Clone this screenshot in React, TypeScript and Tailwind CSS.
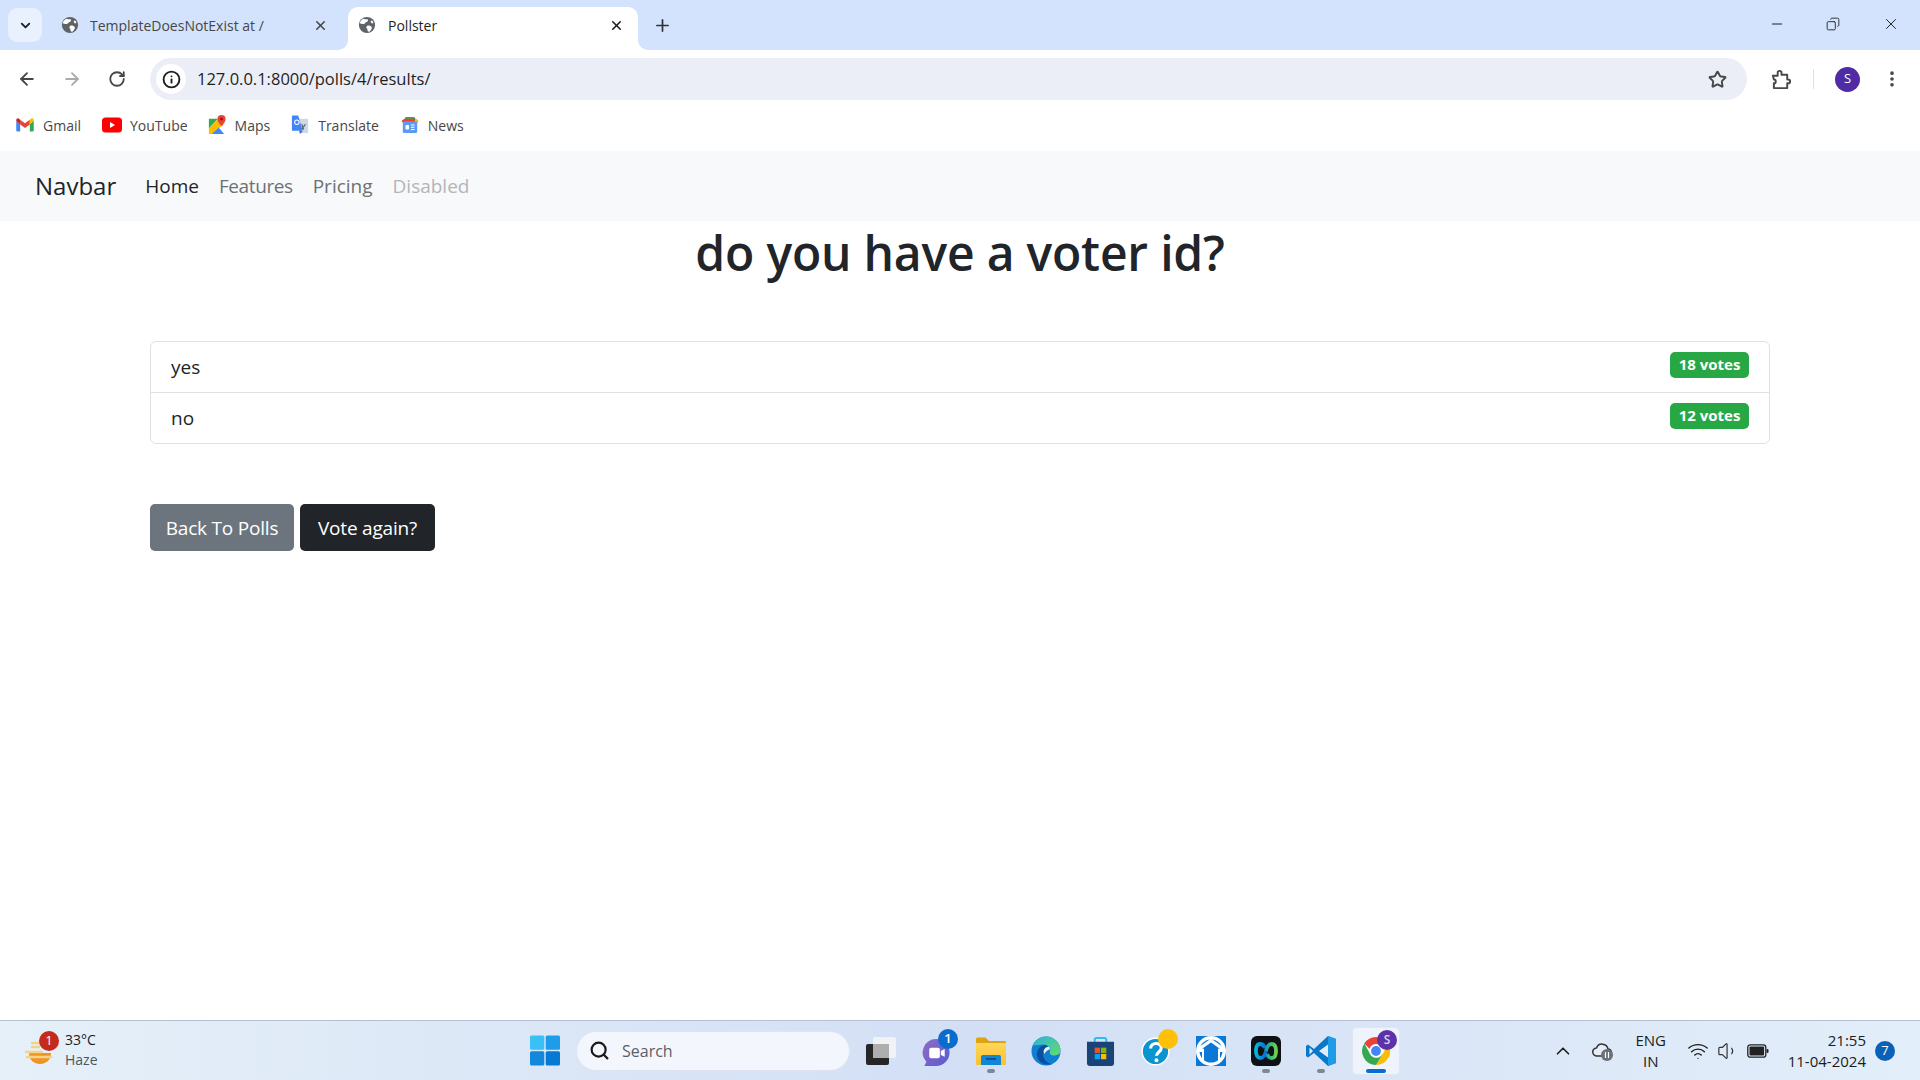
import React from 'react';
import { ArrowLeft, ArrowRight, ChevronDown, ChevronUp, Copy, Info, Minus, MoreVertical, Plus, RotateCw, Search, Star, Volume1, Wifi, X } from 'lucide-react';

const Globe = () => (
  <svg viewBox="0 0 20 20" className="w-[18px] h-[18px] shrink-0">
    <circle cx="10" cy="10" r="9" fill="#5f6368" />
    <path d="M6 3c2 1 4 0 5 1s-1 3-2 3-1 2-3 2-3-1-4-1c0-2 2-4 4-5zM10 11c2-1 4 0 5 1s0 3-1 4-2 2-3 1 0-2-1-3-1-2 0-3zM15 5c1 0 2 1 2 3l-2 0-1-2z" fill="#fff" />
  </svg>
);

const GmailIcon = () => (
  <svg viewBox="0 0 20 16" className="w-[18px] h-[14px]">
    <path d="M0 3v11a1.500 1.500 0 0 0 1.500 1.500H4.500V7z" fill="#4285f4" />
    <path d="M15.500 7v8.500h3a1.500 1.500 0 0 0 1.500-1.500V3z" fill="#34a853" />
    <path d="M4.500 2v5.500L10 11.500l5.500-4V2L10 6z" fill="#ea4335" />
    <path d="M0 3l4.500 4.500V2L3 .800C1.700-.200 0 .800 0 3z" fill="#c5221f" />
    <path d="M15.500 2v5.500L20 3c0-2.200-1.700-3.200-3-2.200z" fill="#fbbc04" />
  </svg>
);

const YoutubeIcon = () => (
  <svg viewBox="0 0 20 16" className="w-[20px] h-[16px]">
    <rect width="20" height="15" y=".5" rx="3.500" fill="#f00" />
    <path d="M8 5v6l5-3z" fill="#fff" />
  </svg>
);

const MapsIcon = () => (
  <svg viewBox="0 0 20 22" className="w-[18px] h-[20px]">
    <path d="M1 4h10L1 15z" fill="#34a853" />
    <path d="M1 15L11 4l6 6v1L4 21H1z" fill="#fbbc04" />
    <path d="M4 21l8-7 6 7z" fill="#4285f4" />
    <path d="M15 0a4.500 4.500 0 0 0-4.500 4.500C10.500 8 15 12 15 12s4.500-4 4.500-7.500A4.500 4.500 0 0 0 15 0z" fill="#ea4335" />
    <circle cx="15" cy="4.500" r="1.600" fill="#a50e0e" />
  </svg>
);

const TranslateIcon = () => (
  <svg viewBox="0 0 20 22" className="w-[18px] h-[20px]">
    <path d="M8 4h10a1 1 0 0 1 1 1v14a1 1 0 0 1-1 1H10z" fill="#cfd8e6" />
    <path d="M12 10l2 6M16 10l-4 6" stroke="#5f6368" strokeWidth="1.300" />
    <path d="M9 17l1 4 3-3z" fill="#3367d6" />
    <path d="M1 1.500A1 1 0 0 1 2 .500h6l5 17H2a1 1 0 0 1-1-1z" fill="#4285f4" />
    <circle cx="6.500" cy="8" r="2.500" fill="none" stroke="#fff" strokeWidth="1.200" />
  </svg>
);

const NewsIcon = () => (
  <svg viewBox="0 0 20 20" className="w-[18px] h-[18px]">
    <path d="M3 6L5 1h10l2 5z" fill="#34a853" />
    <path d="M1 5l3-2 12 0 3 2v2H1z" fill="#ea4335" />
    <path d="M16 3l3 2v2h-4z" fill="#fbbc04" />
    <rect x="2" y="6" width="16" height="13" rx="1.500" fill="#5c9bf1" />
    <rect x="5" y="10" width="4" height="5" rx="1" fill="#fff" />
    <path d="M11 10h4M11 12.500h4M11 15h4" stroke="#fff" strokeWidth="1.200" />
  </svg>
);

const Bookmark = ({ icon, label, className }: { icon: React.ReactNode; label: string; className: string }) => (
  <div className={`flex items-center gap-[8px] ${className}`}>
    <span className="w-[20px] flex justify-center">{icon}</span>
    <span className="text-[14px] text-[#474747] whitespace-nowrap">{label}</span>
  </div>
);

const ListRow = ({ label, votes, last }: { label: string; votes: string; last?: boolean }) => (
  <li className={`flex items-center justify-between pl-[20px] pr-[20px] ${last ? 'h-[50px]' : 'h-[51px] border-b border-[#dfe2e5]'}`}>
    <span className="text-[19px] text-[#212529]">{label}</span>
    <span className="mb-[5px] bg-[#28a745] text-white text-[15px] font-bold rounded-[5px] w-[79px] h-[26px] flex items-center justify-center">{votes}</span>
  </li>
);

const TaskSlot = ({ children, dot }: { children: React.ReactNode; dot?: boolean }) => (
  <div className="relative w-[55px] h-[48px] flex items-center justify-center">
    {children}
    {dot && <span className="absolute bottom-[2px] left-1/2 -translate-x-1/2 w-[8px] h-[4px] rounded-full bg-[#7f8793]" />}
  </div>
);

const Taskbar = () => (
  <div className="flex items-center h-[60px] border-t border-[#b5c0d0] bg-gradient-to-r from-[#e6f0f9] via-[#d3dff5] to-[#e2eef9]">
    {/* weather */}
    <div className="w-[517px] shrink-0 flex items-center pl-[24px]">
      <div className="relative w-[40px] h-[36px]">
        <svg viewBox="0 0 32 32" className="absolute left-0 top-[4px] w-[32px] h-[32px]">
          <path d="M5 16h22c0 7-5 11-11 11S5 23 5 16z" fill="#ee9422" />
          <path d="M2 15h16M8 10h7M3 20h24M8 6h6" stroke="#f4d28a" strokeWidth="2.500" strokeLinecap="round" />
        </svg>
        <span className="absolute left-[15px] -top-[2px] w-[20px] h-[20px] rounded-full bg-[#c42b1c] text-white text-[13px] flex items-center justify-center">1</span>
      </div>
      <div className="ml-[1px] leading-[20px] text-[14px] mt-[-2px]">
        <div className="text-[#1c1c1c]">33°C</div>
        <div className="text-[#4d5561]">Haze</div>
      </div>
    </div>

    {/* centre */}
    <div className="flex items-center">
      <div className="w-[55px] h-[48px] flex items-center justify-center">
        <svg viewBox="0 0 30 30" className="w-[30px] h-[31px]">
          <rect x="0" y="0" width="14.300" height="14.300" rx="1.500" fill="#39c0f5" />
          <rect x="15.700" y="0" width="14.300" height="14.300" rx="1.500" fill="#1c9ceb" />
          <rect x="0" y="15.700" width="14.300" height="14.300" rx="1.500" fill="#1288dd" />
          <rect x="15.700" y="15.700" width="14.300" height="14.300" rx="1.500" fill="#0679d2" />
        </svg>
      </div>
      <div className="ml-[4px] w-[274px] h-[40px] rounded-full bg-[#f3f7fd] border border-[#dde5f2] flex items-center pl-[12px] gap-[12px]">
        <Search className="w-[21px] h-[21px] text-[#1a1a1a]" strokeWidth={2.500} />
        <span className="text-[16px] text-[#5b5f66]">Search</span>
      </div>
      <div className="ml-[3px] flex items-center">
        <TaskSlot>
          <svg viewBox="0 0 30 28" className="w-[30px] h-[28px]">
            <rect x="0" y="7" width="23" height="21" rx="2" fill="#262626" />
            <rect x="7" y="0" width="23" height="21" rx="2" fill="#f4f4f4" fillOpacity=".85" />
            <rect x="7" y="7" width="16" height="14" fill="#aeaeae" />
          </svg>
        </TaskSlot>
        <TaskSlot>
          <svg viewBox="0 0 30 30" className="w-[30px] h-[29px] mt-[3px]">
            <defs>
              <linearGradient id="teamsFill" x1="0" y1="0" x2="1" y2="1">
                <stop offset="0" stopColor="#8f6cc4" />
                <stop offset="1" stopColor="#5b5bd0" />
              </linearGradient>
            </defs>
            <path d="M15 1a14 14 0 0 1 0 28H3l2-4.500A14 14 0 0 1 15 1z" fill="url(#teamsFill)" />
            <rect x="8" y="10" width="11" height="11" rx="2" fill="#fff" />
            <path d="M20 13.500l4-2v8l-4-2z" fill="#fff" />
          </svg>
          <span className="absolute left-[30px] top-[2px] w-[20px] h-[20px] rounded-full bg-[#0a6cce] text-white text-[13px] font-semibold flex items-center justify-center">1</span>
        </TaskSlot>
        <TaskSlot dot>
          <svg viewBox="0 0 30 28" className="w-[30px] h-[28px]">
            <defs>
              <linearGradient id="folderFill" x1="0" y1="0" x2="0" y2="1">
                <stop offset="0" stopColor="#ffd65c" />
                <stop offset="1" stopColor="#fbc02d" />
              </linearGradient>
            </defs>
            <path d="M0 2a1.500 1.500 0 0 1 1.500-1.500h8L13 4h15.500A1.500 1.500 0 0 1 30 5.500V26a1.500 1.500 0 0 1-1.500 1.500h-27A1.500 1.500 0 0 1 0 26z" fill="#dca312" />
            <path d="M0 6h30v20.500a1.500 1.500 0 0 1-1.500 1.500h-27A1.500 1.500 0 0 1 0 26.500z" fill="url(#folderFill)" />
            <path d="M5 20a2 2 0 0 1 2-2h16a2 2 0 0 1 2 2v8H5z" fill="#0f86d6" />
            <rect x="10" y="21" width="10" height="1.800" fill="#0b4f8a" />
          </svg>
        </TaskSlot>
        <TaskSlot>
          <svg viewBox="0 0 32 32" className="w-[30px] h-[30px]">
            <defs>
              <linearGradient id="edgeGreen" x1="0" y1="0" x2="1" y2="1">
                <stop offset="0" stopColor="#2bb3d8" />
                <stop offset="1" stopColor="#65dc6c" />
              </linearGradient>
            </defs>
            <circle cx="16" cy="16" r="15.500" fill="#0f7fd4" />
            <path d="M2 10C5 4 10 .500 16 .500 25 .500 31.500 8 31.500 15c0 5-5 6.500-9 5.500-3-.800-2.500-3.500-2-5.500.800-3.500-4-6.500-8.500-6C8 9.500 5 9.500 2 10z" fill="url(#edgeGreen)" />
            <path d="M15 9.500C9 10 5.500 15.500 6.500 21.500 7.500 27.500 14 32 22 30c-6-1.500-10-6.500-9-11.500.5-3 3-5.500 6-5.500-1-2-2-3.500-4-3.500z" fill="#0c4f9f" />
            <path d="M19 11.500c-3 0-5.500 2.500-5.500 5 0 1 .5 2 1 2.500 1-2.500 3-4 5.500-4.500 0-1.500 0-2.500-1-3z" fill="#eaf2fb" />
          </svg>
        </TaskSlot>
        <TaskSlot>
          <svg viewBox="0 0 30 30" className="w-[29px] h-[29px] mt-[1px]">
            <path d="M9 8V3a2 2 0 0 1 2-2h8a2 2 0 0 1 2 2v5" fill="none" stroke="#38b6ea" strokeWidth="2" />
            <path d="M1 5h28v22a3 3 0 0 1-3 3H4a3 3 0 0 1-3-3z" fill="#1a4477" />
            <rect x="9" y="11" width="5.500" height="5.500" fill="#f25022" />
            <rect x="15.500" y="11" width="5.500" height="5.500" fill="#7fba00" />
            <rect x="9" y="17.500" width="5.500" height="5.500" fill="#00a4ef" />
            <rect x="15.500" y="17.500" width="5.500" height="5.500" fill="#ffb900" />
          </svg>
        </TaskSlot>
        <TaskSlot>
          <svg viewBox="0 0 30 30" className="w-[29px] h-[29px] mt-[1px]">
            <circle cx="15" cy="15" r="13.800" fill="#0a94d0" stroke="#fff" strokeWidth="1.500" />
            <path d="M10 12c0-7 11-7 11-.500 0 4-5 4-5 8" fill="none" stroke="#fff" strokeWidth="3.200" />
            <circle cx="16" cy="24" r="2" fill="#fff" />
          </svg>
          <span className="absolute left-[30px] top-[2px] w-[20px] h-[20px] rounded-full bg-[#ffc107]" />
        </TaskSlot>
        <TaskSlot>
          <svg viewBox="0 0 30 30" className="w-[30px] h-[30px]">
            <rect width="30" height="30" fill="#0a78d4" />
            <circle cx="15" cy="15" r="15" fill="#fff" />
            <circle cx="15" cy="15" r="11.500" fill="#0a78d4" />
            <path d="M15 2.500L27 11v5h-3.500v-3.500L15 6.500l-8.500 6V16H3v-5z" fill="#fff" />
            <path d="M9.500 11.500L15 8l5.500 3.500V24L15 20l-5.500 4z" fill="#0a78d4" />
            <path d="M6 13v11l2 2V12.500zM24 13v11l-2 2V12.500z" fill="#fff" />
          </svg>
        </TaskSlot>
        <TaskSlot dot>
          <div className="w-[30px] h-[30px] rounded-[6px] bg-[#0f1215] flex items-center justify-center">
            <svg viewBox="0 0 26 20" className="w-[26px] h-[20px]">
              <defs>
                <linearGradient id="webexLeft" x1="0" y1="0" x2="1" y2="0">
                  <stop offset="0" stopColor="#00b7d8" />
                  <stop offset="1" stopColor="#1660e0" />
                </linearGradient>
                <linearGradient id="webexRight" x1="0" y1="0" x2="1" y2="0">
                  <stop offset="0" stopColor="#0f9fb0" />
                  <stop offset="1" stopColor="#6cd04a" />
                </linearGradient>
              </defs>
              <path d="M12 7C11 4 9 3 7 3 4 3 3 6 3 10c0 4 1.500 7 4.500 7 3 0 5-4 5.500-7" fill="none" stroke="url(#webexLeft)" strokeWidth="3.800" />
              <path d="M13 10c.500-3 2.500-7 5.500-7 3 0 4.500 3 4.500 7 0 4-1 7-4 7-2 0-4-1-5-4" fill="none" stroke="url(#webexRight)" strokeWidth="3.800" />
            </svg>
          </div>
        </TaskSlot>
        <TaskSlot dot>
          <svg viewBox="0 0 30 30" className="w-[30px] h-[30px]">
            <path d="M22 0L8 13 2 8.500 0 10v10l2 1.500L8 17l14 13 8-3V3z" fill="#0a78c8" />
            <path d="M22 0v30l8-3V3z" fill="#1f9be8" />
            <path d="M3.500 11.500L7 15l-3.500 3.500zM22 8.500L13 15l9 6.500z" fill="#e2ebf8" />
          </svg>
        </TaskSlot>
        <div className="relative w-[48px] h-[48px] ml-[4px] flex items-center justify-center rounded-[5px] bg-[#eff3fb] border border-[#e0e7f3]">
          <svg viewBox="0 0 32 32" className="w-[30px] h-[30px]">
            <path d="M16 1a15 15 0 0 1 13 7.500H16a7.500 7.500 0 0 0-7 5L3.500 8A15 15 0 0 1 16 1z" fill="#ea4335" />
            <path d="M29 8.500A15 15 0 0 1 16 31l6.500-11A7.500 7.500 0 0 0 23 8.500z" fill="#fbbc04" />
            <path d="M16 31A15 15 0 0 1 3.500 8L9.500 19A7.500 7.500 0 0 0 22.500 20z" fill="#34a853" />
            <circle cx="16" cy="16" r="6" fill="#4285f4" stroke="#fff" strokeWidth="1.500" />
          </svg>
          <span className="absolute left-[24px] top-[2px] w-[20px] h-[20px] rounded-full bg-[#5b32a8] text-[#d8cff0] text-[12px] font-semibold flex items-center justify-center">S</span>
          <span className="absolute bottom-[1px] left-1/2 -translate-x-1/2 w-[20px] h-[4px] rounded-full bg-[#0a6cce]" />
        </div>
      </div>
    </div>

    {/* tray */}
    <div className="flex-1 flex items-center justify-end h-full text-[#1c1c1c]">
      <ChevronUp className="w-[22px] h-[22px] mr-[18px]" strokeWidth={1.800} />
      <div className="relative w-[22px] h-[20px] mr-[15px]">
        <svg viewBox="0 0 22 20" className="w-[22px] h-[20px]">
          <path d="M5 15a4 4 0 0 1-.500-8 6 6 0 0 1 11.500 1 3.500 3.500 0 0 1 0 7z" fill="#e7eef8" stroke="#333" strokeWidth="1.500" />
          <circle cx="15" cy="14" r="6" fill="#6b7079" />
          <path d="M13.500 11v6M16.500 11v6" stroke="#fff" strokeWidth="1.200" />
        </svg>
      </div>
      <div className="w-[44px] text-center text-[15px] leading-[21px] mr-[14px]">
        <div>ENG</div>
        <div>IN</div>
      </div>
      <Wifi className="w-[22px] h-[22px] mr-[8px]" strokeWidth={1.500} />
      <Volume1 className="w-[22px] h-[22px] mr-[8px] text-[#333]" strokeWidth={1.300} />
      <svg viewBox="0 0 22 14" className="w-[22px] h-[14px] mr-[19px]">
        <rect x=".800" y=".800" width="18" height="12.400" rx="2.500" fill="none" stroke="#222" strokeWidth="1.300" />
        <rect x="2.500" y="2.500" width="14.600" height="9" rx="1" fill="#222" />
        <rect x="19.500" y="5" width="2" height="4" rx="1" fill="#222" />
      </svg>
      <div className="text-right text-[15px] leading-[21px]">
        <div>21:55</div>
        <div>11-04-2024</div>
      </div>
      <span className="ml-[9px] mr-[25px] w-[20px] h-[20px] rounded-full bg-[#0a62b8] text-white text-[13px] flex items-center justify-center">7</span>
    </div>
  </div>
);

const App = () => {
  return (
    <div className="w-[1920px] h-[1080px] flex flex-col bg-white overflow-hidden font-['Open_Sans','Noto_Sans',sans-serif]">
      {/* tab strip */}
      <div className="h-[50px] bg-[#d3e3fd] flex items-end shrink-0">
        <div className="self-start mt-[8px] ml-[8px] w-[34px] h-[34px] rounded-[9px] bg-[#e9f0fe] flex items-center justify-center">
          <ChevronDown className="w-[15px] h-[15px] text-[#1f1f1f]" strokeWidth={3} />
        </div>
        <div className="w-[267px] ml-[19px] h-[43px] pb-[7px] flex items-center">
          <Globe />
          <span className="ml-[11px] text-[14px] text-[#474747] flex-1 whitespace-nowrap">TemplateDoesNotExist at /</span>
          <X className="w-[15px] h-[15px] text-[#474747]" strokeWidth={2.500} />
        </div>
        <div className="relative ml-[20px] w-[290px] h-[43px] pb-[7px] bg-white rounded-t-[10px] flex items-center pl-[10px] pr-[14px]">
          <svg viewBox="0 0 10 10" className="absolute bottom-0 -left-[10px] w-[10px] h-[10px]">
            <path d="M10 0v10H0a10 10 0 0 0 10-10z" fill="#fff" />
          </svg>
          <svg viewBox="0 0 10 10" className="absolute bottom-0 -right-[10px] w-[10px] h-[10px]">
            <path d="M0 0v10h10A10 10 0 0 1 0 0z" fill="#fff" />
          </svg>
          <Globe />
          <span className="ml-[12px] text-[14px] text-[#1f1f1f] flex-1">Pollster</span>
          <X className="w-[15px] h-[15px] text-[#1f1f1f]" strokeWidth={2.500} />
        </div>
        <div className="ml-[15px] h-[43px] pb-[7px] flex items-center">
          <Plus className="w-[19px] h-[19px] text-[#333]" strokeWidth={2.200} />
        </div>
        <div className="flex-1 self-stretch flex items-center justify-end pr-[20px] pb-[2px] text-[#1f1f1f]">
          <Minus className="w-[16px] h-[16px] mr-[41px]" strokeWidth={1.500} />
          <Copy className="w-[14px] h-[14px] mr-[42px] -scale-x-100" strokeWidth={1.500} />
          <X className="w-[18px] h-[18px]" strokeWidth={1.300} />
        </div>
      </div>

      {/* toolbar */}
      <div className="h-[58px] bg-white rounded-t-[8px] flex items-center shrink-0">
        <ArrowLeft className="w-[20px] h-[20px] ml-[17px] text-[#474747]" strokeWidth={2.200} />
        <ArrowRight className="w-[20px] h-[20px] ml-[25px] text-[#a9abae]" strokeWidth={2.200} />
        <RotateCw className="w-[18px] h-[18px] ml-[26px] text-[#474747]" strokeWidth={2.400} />
        <div className="ml-[24px] flex-1 h-[42px] rounded-full bg-[#ebeef7] flex items-center pl-[6px] pr-[20px]">
          <span className="w-[30px] h-[30px] rounded-full bg-white flex items-center justify-center">
            <Info className="w-[19px] h-[19px] text-[#1f1f1f]" strokeWidth={2.400} />
          </span>
          <span className="ml-[11px] text-[16.500px] text-[#1f1f1f] flex-1">127.0.0.1:8000/polls/4/results/</span>
          <Star className="w-[19px] h-[19px] text-[#474747]" strokeWidth={2.400} />
        </div>
        <svg viewBox="0 0 22 22" className="ml-[24px] w-[21px] h-[21px]">
          <path d="M2 7h5V4a2 2 0 0 1 4 0v2h6v5h1a2 2 0 0 1 0 4h-1v5H3v-5a2 2 0 0 0 0-4z" fill="none" stroke="#474747" strokeWidth="2" strokeLinejoin="round" />
        </svg>
        <span className="ml-[21px] w-px h-[20px] bg-[#d3e3fd]" />
        <span className="ml-[21px] w-[25px] h-[25px] rounded-full bg-[#4f2ba4] text-white text-[13px] flex items-center justify-center">S</span>
        <MoreVertical className="ml-[22px] mr-[18px] w-[20px] h-[20px] text-[#474747]" strokeWidth={2.400} />
      </div>

      {/* bookmarks */}
      <div className="h-[43px] pb-[9px] bg-white flex items-center pl-[15px] shrink-0">
        <Bookmark icon={<GmailIcon />} label="Gmail" className="" />
        <Bookmark icon={<YoutubeIcon />} label="YouTube" className="ml-[21px]" />
        <Bookmark icon={<MapsIcon />} label="Maps" className="ml-[19px]" />
        <Bookmark icon={<TranslateIcon />} label="Translate" className="ml-[20px]" />
        <Bookmark icon={<NewsIcon />} label="News" className="ml-[21px]" />
      </div>

      {/* page */}
      <div className="flex-1 flex flex-col min-h-0">
        <nav className="h-[70px] bg-[#f8f9fa] flex items-center pl-[35px] shrink-0">
          <span className="text-[24px] text-[#212529] mr-[29px]">Navbar</span>
          <div className="flex items-center gap-[20px] text-[19px] pt-[1px]">
            <span className="text-[#212529]">Home</span>
            <span className="text-[#6d7175] tracking-[-0.4px]">Features</span>
            <span className="text-[#6d7175]">Pricing</span>
            <span className="text-[#b3b5b7]">Disabled</span>
          </div>
        </nav>
        <main className="px-[150px]">
          <h1 className="text-center text-[48px] font-semibold tracking-[-0.2px] text-[#212529] leading-[60px] mt-[2px]">do you have a voter id?</h1>
          <ul className="mt-[58px] border border-[#dfe2e5] rounded-[6px]">
            <ListRow label="yes" votes="18 votes" />
            <ListRow label="no" votes="12 votes" last />
          </ul>
          <div className="mt-[60px] flex gap-[6px]">
            <button className="w-[144px] h-[47px] pt-[2px] rounded-[5px] bg-[#6c757d] text-white text-[19px] tracking-[-0.2px]">Back To Polls</button>
            <button className="w-[135px] h-[47px] pt-[2px] rounded-[5px] bg-[#212529] text-white text-[19px] tracking-[-0.2px]">Vote again?</button>
          </div>
        </main>
      </div>

      <Taskbar />
    </div>
  );
};

export default App;
